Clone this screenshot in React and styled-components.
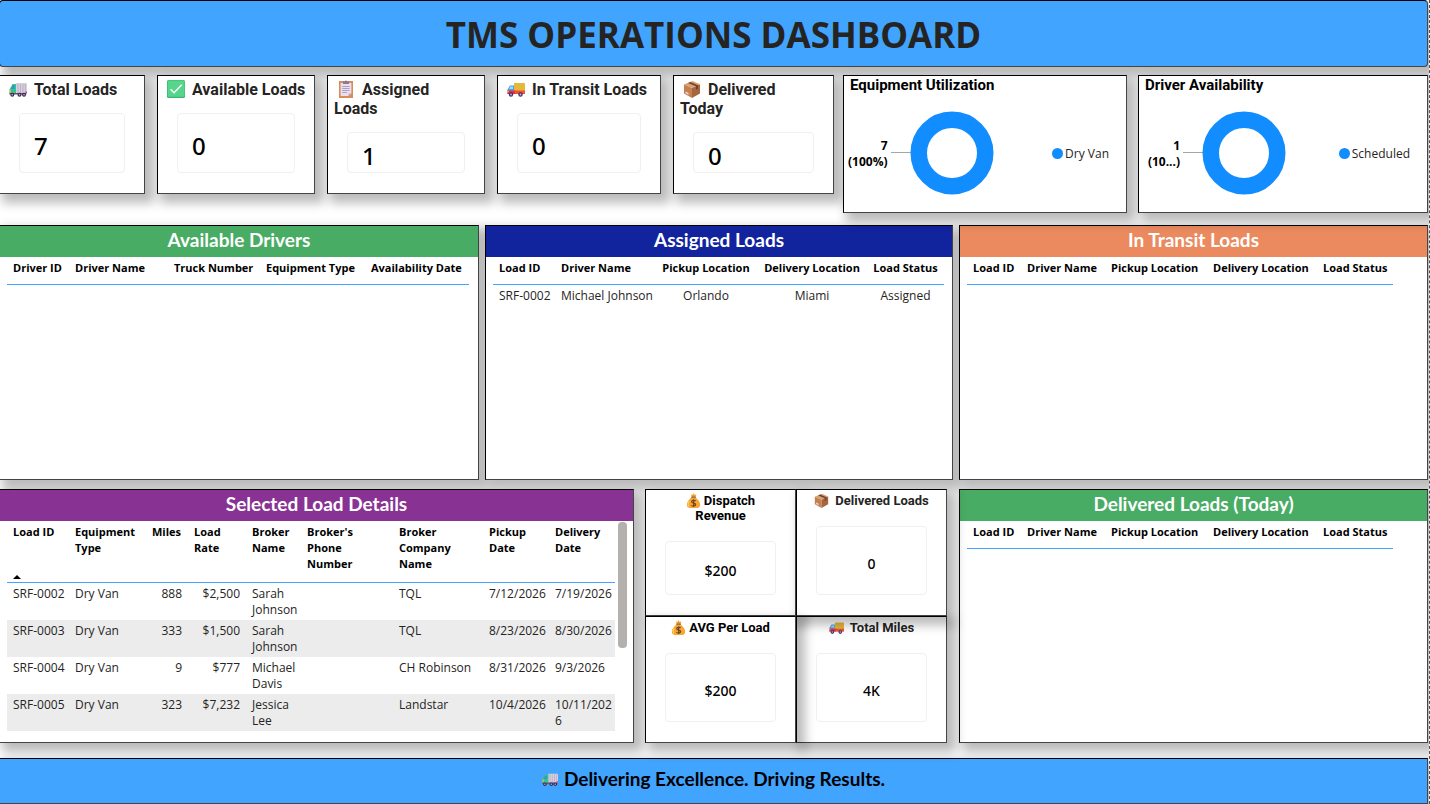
import React from 'react'
import styled, { createGlobalStyle, css } from 'styled-components'

const SEGOE = '"Open Sans", "Noto Sans", sans-serif'
const SEGOE_MEDIUM = '"Noto Sans", "Open Sans", sans-serif'
const DIN = 'Roboto, "Liberation Sans", sans-serif'
const CALIBRI = 'Lato, "Open Sans", sans-serif'

const BLUE = '#41a4ff'
const CHART_BLUE = '#118dff'
const GREEN = '#48ac64'
const NAVY = '#12239e'
const ORANGE = '#eb8a5f'
const PURPLE = '#883393'

const GlobalStyle = createGlobalStyle`
  * {
    box-sizing: border-box;
  }

  body {
    margin: 0;
    background: #fff;
    color: #252423;
    font-family: ${SEGOE};
    font-size: 12px;
  }

  h1, h2, h3, p {
    margin: 0;
  }
`

const card = css`
  background: #fff;
  border: 1px solid #000;
  border-right-color: #444;
  border-bottom-color: #444;
  box-shadow: 6px 6px 10px 3px rgba(0, 0, 0, .27);
`

const Page = styled.div`
  display: flex;
  flex-direction: column;
  height: 100vh;
  min-height: 720px;
  margin-left: -1px;
  padding-right: 1px;
  border-right: 1px dashed #555;
  overflow: hidden;
`

const TitleBar = styled.header`
  ${card}
  display: flex;
  flex: none;
  align-items: center;
  justify-content: center;
  height: 67px;
  padding-top: 2px;
  background: ${BLUE};
  border-radius: 4px;
`

const Title = styled.h1`
  font-size: 35px;
  line-height: 48px;
  font-weight: 700;
`

const SummaryRow = styled.section`
  position: relative;
  z-index: 1;
  display: grid;
  flex: none;
  grid-template-columns: minmax(0, 835fr) minmax(0, 585fr);
  gap: 9px;
  height: 138px;
  margin-top: 8px;
`

const Kpis = styled.div`
  display: grid;
  grid-template-columns: 146fr 158fr 158fr 164fr 161fr;
  gap: 12px;
  align-self: start;
  height: 119px;
`

const Kpi = styled.article`
  ${card}
  display: flex;
  flex-direction: column;
  min-width: 0;
  padding: 4px 19px 20px;
`

const KpiTitle = styled.h2`
  margin: 0 -13px 14px;
  font-family: ${DIN};
  font-size: 16px;
  line-height: 19px;
  font-weight: 700;
  white-space: nowrap;

  svg {
    width: 18px;
    height: 18px;
    margin: 0 7px 0 3px;
    vertical-align: -3px;
  }
`

const ValueBox = styled.p`
  display: flex;
  flex: 1;
  align-items: center;
  padding: 6px 14px 0;
  border: 1px solid #f0f0f0;
  border-radius: 4px;
  color: #000;
  font-family: ${SEGOE_MEDIUM};
  font-size: 24px;
  line-height: 32px;
  font-weight: 500;
`

const Charts = styled.div`
  display: grid;
  grid-template-columns: minmax(0, 284fr) minmax(0, 290fr);
  gap: 11px;
`

const Chart = styled.article`
  ${card}
  display: flex;
  flex-direction: column;
`

const ChartTitle = styled.h2`
  padding-left: 6px;
  color: #000;
  font-family: ${DIN};
  font-size: 15px;
  line-height: 19px;
  font-weight: 700;
`

const ChartBody = styled.div`
  display: flex;
  flex: 1;
  align-items: center;
  padding: 0 17px 2px 4px;
`

const DonutLabel = styled.div`
  min-width: 37px;
  margin-right: 3px;
  padding-top: 2px;
  color: #000;
  font-size: 12px;
  line-height: 16px;
  font-weight: 700;
  text-align: right;
`

const Legend = styled.div`
  display: flex;
  align-items: center;
  gap: 2px;
  margin-left: auto;
  padding-top: 2px;

  &::before {
    content: '';
    width: 11px;
    height: 11px;
    border-radius: 50%;
    background: ${CHART_BLUE};
  }
`

const LoadsRow = styled.section`
  display: grid;
  flex: 255 1 0;
  grid-template-columns: minmax(0, 480fr) minmax(0, 468fr) minmax(0, 469fr);
  grid-template-rows: minmax(0, 1fr);
  gap: 6px;
  min-height: 0;
  margin-top: 12px;
`

const DetailsRow = styled.section`
  display: grid;
  flex: 254 1 0;
  grid-template-columns: minmax(0, 635fr) minmax(0, 303fr) minmax(0, 469fr);
  grid-template-rows: minmax(0, 1fr);
  gap: 11px;
  min-height: 0;
  margin-top: 9px;
`

const StyledPanel = styled.article`
  ${card}
  display: flex;
  flex-direction: column;
  min-height: 0;
`

const PanelTitle = styled.h2`
  padding-bottom: 4px;
  background: ${props => props.$color};
  color: #fff;
  font-family: ${CALIBRI};
  font-size: 19px;
  line-height: 27px;
  font-weight: 700;
  text-align: center;
`

const PanelBody = styled.div`
  display: flex;
  flex: 1;
  gap: 3px;
  min-height: 0;
  padding: 0 5px 6px 7px;
  overflow: hidden;
`

const ScrollThumb = styled.div`
  width: 9px;
  height: 126px;
  margin-top: 1px;
  border-radius: 4px;
  background: #b3b0ad;
`

const Table = styled.table`
  flex: none;
  align-self: flex-start;
  border-collapse: separate;
  border-spacing: 0;
  table-layout: fixed;
  width: ${props => props.$width}px;
`

const HeadCell = styled.th`
  height: ${props => props.$tall ? 62 : 28}px;
  padding: 3px 0 0 ${props => props.$align ? 0 : 6}px;
  border-bottom: 1px solid ${BLUE};
  color: #000;
  font-size: 11px;
  line-height: 16px;
  font-weight: 700;
  text-align: ${props => props.$align || 'left'};
  vertical-align: top;
  white-space: pre-line;
`

const SortMark = styled.svg`
  display: block;
  width: 8px;
  height: 4px;
  margin-top: 35px;
`

const Cell = styled.td`
  height: 37px;
  padding: 3px 6px 2px;
  font-size: 12px;
  line-height: 16px;
  text-align: ${props => props.$align || 'left'};
  vertical-align: top;
  white-space: pre;
`

const Row = styled.tr`
  &:nth-child(even) {
    background: #ececec;
  }
`

const Metrics = styled.div`
  display: grid;
  grid-template-columns: 1fr 1fr;
  grid-template-rows: 1fr 1fr;
  min-height: 0;
  margin-right: 1px;
`

const Metric = styled.article`
  ${card}
  position: relative;
  z-index: ${props => props.$under ? 0 : 1};
  display: flex;
  flex-direction: column;
  padding: 3px 19px 20px;
`

const MetricTitle = styled.h3`
  margin: 0 -19px 18px;
  color: ${props => props.$dark ? '#000' : '#252423'};
  font-family: ${DIN};
  font-size: 13px;
  line-height: 15px;
  font-weight: 700;
  text-align: center;
  white-space: pre-line;

  svg {
    width: 15px;
    height: 15px;
    margin-right: ${props => props.$dark ? 3 : 6}px;
    vertical-align: -3px;
  }
`

const MetricBox = styled(ValueBox)`
  justify-content: center;
  font-size: 14px;
  line-height: 20px;
`

const Footer = styled.footer`
  ${card}
  display: flex;
  flex: none;
  align-items: center;
  justify-content: center;
  gap: 6px;
  height: 46px;
  margin-top: 15px;
  padding-bottom: 5px;
  background: ${BLUE};
  color: #000;
  font-family: ${CALIBRI};
  font-size: 19px;
  line-height: 24px;
  font-weight: 700;

  svg {
    width: 16px;
    height: 16px;
  }
`

const LorryIcon = () => (
  <svg viewBox="0 0 18 18" aria-hidden="true">
    <path d="M7 3h10a1 1 0 0 1 1 1v9H7z" fill="#d8cfe0" />
    <path d="M9 4v9M11.500 4v9M14 4v9M16.300 4v9" stroke="#b3a9bd" strokeWidth=".8" />
    <path d="M3.500 4H7v10H.5V9.500z" fill="#35c48a" />
    <path d="M3.600 5.300H5.600V9H2z" fill="#3a8fd8" />
    <path d="M.5 9.500h1.300v3H.5z" fill="#f4c430" />
    <path d="M.5 13H17.500v1.500H.5z" fill="#6b4d78" />
    <path d="M16.700 11.500H18v1.500h-1.300z" fill="#e8306c" />
    <g fill="#3c2b52">
      <circle cx="3.300" cy="14.800" r="2" />
      <circle cx="10.500" cy="14.800" r="2" />
      <circle cx="15" cy="14.800" r="2" />
    </g>
    <g fill="#cbbfd6">
      <circle cx="3.300" cy="14.800" r=".8" />
      <circle cx="10.500" cy="14.800" r=".8" />
      <circle cx="15" cy="14.800" r=".8" />
    </g>
  </svg>
)

const TruckIcon = () => (
  <svg viewBox="0 0 18 18" aria-hidden="true">
    <path d="M7 3h10a1 1 0 0 1 1 1v8H7z" fill="#e5b83a" />
    <path d="M3 5.500h4V12H.3L.8 9z" fill="#4a9fea" />
    <path d="M3.300 6.500H6V9H2.200z" fill="#9bdcff" />
    <path d="M7 10.500h11V14H7z" fill="#f1532f" />
    <path d="M.3 10.500H8V14H.3z" fill="#e8303a" />
    <path d="M.3 11h1.400v1.300H.3z" fill="#ffd35a" />
    <g fill="#41306b">
      <circle cx="4" cy="14.500" r="2.200" />
      <circle cx="13.500" cy="14.500" r="2.200" />
    </g>
    <g fill="#c3b7e3">
      <circle cx="4" cy="14.500" r=".9" />
      <circle cx="13.500" cy="14.500" r=".9" />
    </g>
  </svg>
)

const CheckIcon = () => (
  <svg viewBox="0 0 18 18" aria-hidden="true">
    <rect width="18" height="18" rx="1.500" fill="#3eb571" />
    <rect x=".8" y=".5" width="16.700" height="16.300" rx="1.200" fill="#55d68b" />
    <path d="M3.500 9.200l3.600 3.500 7.600-8" fill="none" stroke="#fff" strokeWidth="1.500" />
  </svg>
)

const ClipboardIcon = () => (
  <svg viewBox="0 0 18 18" aria-hidden="true">
    <path d="M2 1h14v17H2z" fill="#d98b58" />
    <path d="M3.600 3h10.800v10.500L11.500 16H3.600z" fill="#e9dff0" />
    <path d="M14.400 13.500h-2.900V16z" fill="#bba9cb" />
    <path d="M6 1.500h1.800a1.300 1.300 0 0 1 2.500 0H12V4H6z" fill="#87799a" />
    <path d="M5.300 6.500h7.300M5.300 8.500h7.300M5.300 10.500h7.300M5.300 12.500h4.500" stroke="#a698b5" strokeWidth=".9" />
  </svg>
)

const BoxIcon = () => (
  <svg viewBox="0 0 18 18" aria-hidden="true">
    <path d="M1 4.500L9.500 1 17 4.200 9 8z" fill="#dca071" />
    <path d="M1 4.500L9 8v10l-8-4.500z" fill="#c4814f" />
    <path d="M17 4.200L9 8v10l8-4.500z" fill="#a8663e" />
    <path d="M5 2.900l8 3.300v3.500l2-1V5.200L7.200 1.900z" fill="#6e4330" />
    <path d="M2.500 11.500l3 1.500v1.700l-3-1.500z" fill="#ecd8e4" />
  </svg>
)

const MoneyBagIcon = () => (
  <svg viewBox="0 0 18 18" aria-hidden="true">
    <path d="M6 1.500l1.500.8L9 .3l1.500 2 2-.8-1.200 3.700H7z" fill="#f3a02f" />
    <path d="M7 5h4.300c3 2.400 5.700 5.900 5.700 9 0 2.800-2 4-4.500 4h-7C2.500 18 1 16.600 1 14c0-3.200 3-6.700 6-9z" fill="#f7a62e" />
    <path d="M4 10c-1.500 2-1.800 4.500-.5 6" fill="none" stroke="#ffd35e" strokeWidth="1.300" />
    <path d="M6.300 5h5.500" stroke="#93512d" strokeWidth="1.300" />
    <path d="M11.600 9.500C11 8.700 6.800 8.300 6.800 10.500S11.600 11.700 11.600 13.900 7.300 16 6.500 14.700M9.200 7.500v9.300" fill="none" stroke="#70432d" strokeWidth="1.400" />
  </svg>
)

const Donut = () => (
  <svg width="103" height="84" viewBox="0 0 103 84" aria-hidden="true">
    <path d="M0 41.500h20" stroke="#a6a6a6" />
    <circle cx="61" cy="42" r="33.250" fill="none" stroke={CHART_BLUE} strokeWidth="16.500" />
  </svg>
)

const KPIS = [
  { icon: LorryIcon, title: 'Total Loads', value: '7' },
  { icon: CheckIcon, title: 'Available Loads', value: '0' },
  { icon: ClipboardIcon, title: 'Assigned', rest: 'Loads', value: '1' },
  { icon: TruckIcon, title: 'In Transit Loads', value: '0' },
  { icon: BoxIcon, title: 'Delivered', rest: 'Today', value: '0' }
]

const CHARTS = [
  { title: 'Equipment Utilization', count: '7', share: '(100%)', legend: 'Dry Van' },
  { title: 'Driver Availability', count: '1', share: '(10...)', legend: 'Scheduled' }
]

const METRICS = [
  { icon: MoneyBagIcon, title: 'Dispatch\nRevenue', value: '$200', dark: true },
  { icon: BoxIcon, title: 'Delivered Loads', value: '0' },
  { icon: MoneyBagIcon, title: 'AVG Per Load', value: '$200', dark: true },
  { icon: TruckIcon, title: 'Total Miles', value: '4K', under: true }
]

const DRIVER_COLUMNS = [
  { label: 'Driver ID', width: 62 },
  { label: 'Driver Name', width: 99 },
  { label: 'Truck Number', width: 92 },
  { label: 'Equipment Type', width: 105 },
  { label: 'Availability Date', width: 104 }
]

const ASSIGNED_COLUMNS = [
  { label: 'Load ID', width: 62 },
  { label: 'Driver Name', width: 100 },
  { label: 'Pickup Location', width: 102, align: 'center' },
  { label: 'Delivery Location', width: 110, align: 'center' },
  { label: 'Load Status', width: 77, align: 'center' }
]

const LOAD_COLUMNS = [
  { label: 'Load ID', width: 54 },
  { label: 'Driver Name', width: 84 },
  { label: 'Pickup Location', width: 102 },
  { label: 'Delivery Location', width: 110 },
  { label: 'Load Status', width: 76 }
]

const DETAIL_COLUMNS = [
  { label: 'Load ID', width: 62, sorted: true },
  { label: 'Equipment\nType', width: 77 },
  { label: 'Miles', width: 42, cellAlign: 'right' },
  { label: 'Load\nRate', width: 58, cellAlign: 'right' },
  { label: 'Broker\nName', width: 55 },
  { label: 'Broker\'s\nPhone\nNumber', width: 92 },
  { label: 'Broker\nCompany\nName', width: 90 },
  { label: 'Pickup\nDate', width: 66 },
  { label: 'Delivery\nDate', width: 66 }
]

const ASSIGNED = [
  ['SRF-0002', 'Michael Johnson', 'Orlando', 'Miami', 'Assigned']
]

const DETAILS = [
  ['SRF-0002', 'Dry Van', '888', '$2,500', 'Sarah\nJohnson', '', 'TQL', '7/12/2026', '7/19/2026'],
  ['SRF-0003', 'Dry Van', '333', '$1,500', 'Sarah\nJohnson', '', 'TQL', '8/23/2026', '8/30/2026'],
  ['SRF-0004', 'Dry Van', '9', '$777', 'Michael\nDavis', '', 'CH Robinson', '8/31/2026', '9/3/2026'],
  ['SRF-0005', 'Dry Van', '323', '$7,232', 'Jessica\nLee', '', 'Landstar', '10/4/2026', '10/11/202\n6']
]

const Panel = ({ title, color, columns, rows = [], tall }) => (
  <StyledPanel>
    <PanelTitle $color={color}>{title}</PanelTitle>

    <PanelBody>
      <Table $width={columns.reduce((sum, column) => sum + column.width, 0)}>
        <colgroup>
          {columns.map(column => (
            <col key={column.label} width={column.width} />
          ))}
        </colgroup>
        <thead>
          <tr>
            {columns.map(column => (
              <HeadCell key={column.label} scope="col" $align={column.align} $tall={tall}>
                {column.label}
                {column.sorted && (
                  <SortMark viewBox="0 0 8 4" aria-hidden="true">
                    <path d="M0 4l4-4 4 4z" />
                  </SortMark>
                )}
              </HeadCell>
            ))}
          </tr>
        </thead>
        <tbody>
          {rows.map(row => (
            <Row key={row[0]}>
              {row.map((text, i) => (
                <Cell key={columns[i].label} $align={columns[i].cellAlign || columns[i].align}>
                  {text}
                </Cell>
              ))}
            </Row>
          ))}
        </tbody>
      </Table>

      {tall && <ScrollThumb />}
    </PanelBody>
  </StyledPanel>
)

const App = () => (
  <>
    <GlobalStyle />

    <Page>
      <TitleBar>
        <Title>TMS OPERATIONS DASHBOARD</Title>
      </TitleBar>

      <SummaryRow>
        <Kpis>
          {KPIS.map(({ icon: Icon, title, rest, value }) => (
            <Kpi key={title}>
              <KpiTitle>
                <Icon />
                {title}
                {rest && <><br />{rest}</>}
              </KpiTitle>
              <ValueBox>{value}</ValueBox>
            </Kpi>
          ))}
        </Kpis>

        <Charts>
          {CHARTS.map(chart => (
            <Chart key={chart.title}>
              <ChartTitle>{chart.title}</ChartTitle>
              <ChartBody>
                <DonutLabel>
                  {chart.count}
                  <br />
                  {chart.share}
                </DonutLabel>
                <Donut />
                <Legend>{chart.legend}</Legend>
              </ChartBody>
            </Chart>
          ))}
        </Charts>
      </SummaryRow>

      <LoadsRow>
        <Panel title="Available Drivers" color={GREEN} columns={DRIVER_COLUMNS} />
        <Panel title="Assigned Loads" color={NAVY} columns={ASSIGNED_COLUMNS} rows={ASSIGNED} />
        <Panel title="In Transit Loads" color={ORANGE} columns={LOAD_COLUMNS} />
      </LoadsRow>

      <DetailsRow>
        <Panel title="Selected Load Details" color={PURPLE} columns={DETAIL_COLUMNS} rows={DETAILS} tall />

        <Metrics>
          {METRICS.map(({ icon: Icon, title, value, dark, under }) => (
            <Metric key={title} $under={under}>
              <MetricTitle $dark={dark}>
                <Icon />
                {title}
              </MetricTitle>
              <MetricBox>{value}</MetricBox>
            </Metric>
          ))}
        </Metrics>

        <Panel title="Delivered Loads (Today)" color={GREEN} columns={LOAD_COLUMNS} />
      </DetailsRow>

      <Footer>
        <LorryIcon />
        Delivering Excellence. Driving Results.
      </Footer>
    </Page>
  </>
)

export default App
